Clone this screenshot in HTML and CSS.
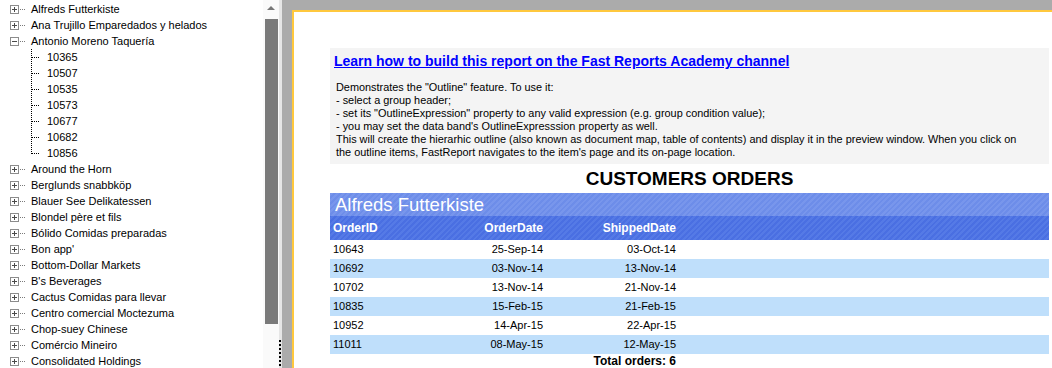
FILE: index.html
```html
<!DOCTYPE html>
<html lang="en">
<head>
  <meta charset="UTF-8">
  <title>Preview - Outline</title>
  <link rel="stylesheet" href="styles.css">
</head>
<body>
  <div class="tree">
    <div class="node"><span class="box plus"></span><span class="dots"></span><span class="label">Alfreds Futterkiste</span></div>
    <div class="node"><span class="box plus"></span><span class="dots"></span><span class="label">Ana Trujillo Emparedados y helados</span></div>
    <div class="node"><span class="box"></span><span class="dots"></span><span class="label">Antonio Moreno Taquería</span></div>
    <div class="leaf"><span class="elbow"></span><span class="label">10365</span></div>
    <div class="leaf"><span class="elbow"></span><span class="label">10507</span></div>
    <div class="leaf"><span class="elbow"></span><span class="label">10535</span></div>
    <div class="leaf"><span class="elbow"></span><span class="label">10573</span></div>
    <div class="leaf"><span class="elbow"></span><span class="label">10677</span></div>
    <div class="leaf"><span class="elbow"></span><span class="label">10682</span></div>
    <div class="leaf last"><span class="elbow"></span><span class="label">10856</span></div>
    <div class="node"><span class="box plus"></span><span class="dots"></span><span class="label">Around the Horn</span></div>
    <div class="node"><span class="box plus"></span><span class="dots"></span><span class="label">Berglunds snabbköp</span></div>
    <div class="node"><span class="box plus"></span><span class="dots"></span><span class="label">Blauer See Delikatessen</span></div>
    <div class="node"><span class="box plus"></span><span class="dots"></span><span class="label">Blondel père et fils</span></div>
    <div class="node"><span class="box plus"></span><span class="dots"></span><span class="label">Bólido Comidas preparadas</span></div>
    <div class="node"><span class="box plus"></span><span class="dots"></span><span class="label">Bon app'</span></div>
    <div class="node"><span class="box plus"></span><span class="dots"></span><span class="label">Bottom-Dollar Markets</span></div>
    <div class="node"><span class="box plus"></span><span class="dots"></span><span class="label">B's Beverages</span></div>
    <div class="node"><span class="box plus"></span><span class="dots"></span><span class="label">Cactus Comidas para llevar</span></div>
    <div class="node"><span class="box plus"></span><span class="dots"></span><span class="label">Centro comercial Moctezuma</span></div>
    <div class="node"><span class="box plus"></span><span class="dots"></span><span class="label">Chop-suey Chinese</span></div>
    <div class="node"><span class="box plus"></span><span class="dots"></span><span class="label">Comércio Mineiro</span></div>
    <div class="node"><span class="box plus"></span><span class="dots"></span><span class="label">Consolidated Holdings</span></div>
  </div>

  <div class="scrollbar">
    <div class="arrow"></div>
    <div class="thumb"></div>
  </div>

  <div class="splitter">
    <div class="grip">
      <span></span><span></span><span></span><span></span><span></span><span></span><span></span>
    </div>
  </div>

  <div class="preview">
    <div class="page">
      <div class="note">
        <a class="link" href="#">Learn how to build this report on the Fast Reports Academy channel</a>
        <div class="desc">
          Demonstrates the "Outline" feature. To use it:<br>
          - select a group header;<br>
          - set its "OutlineExpression" property to any valid expression (e.g. group condition value);<br>
          - you may set the data band's OutlineExpresssion property as well.<br>
          This will create the hierarhic outline (also known as document map, table of contents) and display it in the preview window. When you click on<br>
          the outline items, FastReport navigates to the item's page and its on-page location.
        </div>
      </div>

      <h1 class="title">CUSTOMERS ORDERS</h1>

      <div class="group">Alfreds Futterkiste</div>
      <div class="row head">
        <span class="id">OrderID</span>
        <span class="num">OrderDate</span>
        <span class="num">ShippedDate</span>
      </div>
      <div class="row"><span class="id">10643</span><span class="num">25-Sep-14</span><span class="num">03-Oct-14</span></div>
      <div class="row alt"><span class="id">10692</span><span class="num">03-Nov-14</span><span class="num">13-Nov-14</span></div>
      <div class="row"><span class="id">10702</span><span class="num">13-Nov-14</span><span class="num">21-Nov-14</span></div>
      <div class="row alt"><span class="id">10835</span><span class="num">15-Feb-15</span><span class="num">21-Feb-15</span></div>
      <div class="row"><span class="id">10952</span><span class="num">14-Apr-15</span><span class="num">22-Apr-15</span></div>
      <div class="row alt"><span class="id">11011</span><span class="num">08-May-15</span><span class="num">12-May-15</span></div>
      <div class="row total"><span></span><span></span><span class="num">Total orders: 6</span></div>
    </div>
  </div>
</body>
</html>
```

FILE: styles.css
```css
:root {
  --tree-text: #000000;
  --tree-line: #7a7a7a;
  --scroll-thumb: #7a7a7a;
  --splitter: #e6e6e6;
  --desk: #ababab;
  --page-border: #ffc83d;
  --note-bg: #f4f4f4;
  --link: #0000ff;
  --group-bg: #6d8de9;
  --group-stripe: #7896ec;
  --head-bg: #4a6fe2;
  --head-stripe: #557ae6;
  --row-alt: #bfdffb;
}

* {
  box-sizing: border-box;
  margin: 0;
  padding: 0;
}

body {
  display: flex;
  height: 368px;
  overflow: hidden;
  font-family: 'Liberation Sans', Arial, sans-serif;
  font-size: 11px;
  background: white;
}

/* outline tree */

.tree {
  width: 263px;
  flex: none;
  padding-top: 1px;
  background: white;
  overflow: hidden;
  color: var(--tree-text);
}

.node,
.leaf {
  display: flex;
  align-items: center;
  height: 16px;
  white-space: nowrap;
}

.node {
  padding-left: 10px;
}

.box {
  position: relative;
  width: 9px;
  height: 9px;
  flex: none;
  border: 1px solid #8c8c8c;
  background: white;
}

.box::before {
  content: '';
  position: absolute;
  left: 1px;
  top: 3px;
  width: 5px;
  height: 1px;
  background: #4a4a4a;
}

.box.plus::after {
  content: '';
  position: absolute;
  left: 3px;
  top: 1px;
  width: 1px;
  height: 5px;
  background: #4a4a4a;
}

.dots {
  width: 6px;
  height: 1px;
  margin: 0 5px 0 1px;
  flex: none;
  background: repeating-linear-gradient(to right, var(--tree-line) 0 1px, transparent 1px 2px);
}

.leaf {
  padding-left: 31px;
  align-items: stretch;
}

.leaf .label {
  display: flex;
  align-items: center;
}

.elbow {
  width: 16px;
  flex: none;
  background:
    repeating-linear-gradient(to bottom, #000 0 1px, transparent 1px 2px) 0 0 / 1px 100% no-repeat,
    repeating-linear-gradient(to right, #000 0 1px, transparent 1px 2px) 1px 8px / 7px 1px no-repeat;
}

.leaf.last .elbow {
  background:
    repeating-linear-gradient(to bottom, #000 0 1px, transparent 1px 2px) 0 0 / 1px 9px no-repeat,
    repeating-linear-gradient(to right, #000 0 1px, transparent 1px 2px) 1px 8px / 7px 1px no-repeat;
}

/* scrollbar + splitter */

.scrollbar {
  width: 16px;
  flex: none;
  display: flex;
  flex-direction: column;
  align-items: center;
  background: #fafafa;
}

.arrow {
  width: 0;
  height: 0;
  margin: 6px 0 9px;
  border-left: 4.5px solid transparent;
  border-right: 4.5px solid transparent;
  border-bottom: 4px solid #777;
}

.thumb {
  width: 13px;
  height: 305px;
  background: var(--scroll-thumb);
}

.splitter {
  width: 3px;
  flex: none;
  display: flex;
  flex-direction: column;
  justify-content: flex-end;
  background: var(--splitter);
}

.grip {
  display: flex;
  flex-direction: column;
  gap: 2px;
  padding-bottom: 2px;
}

.grip span {
  width: 2px;
  height: 2px;
  background: #000;
}

/* report preview */

.preview {
  flex: 1;
  min-width: 0;
  overflow: hidden;
  padding: 10px 0 0 10px;
  background: var(--desk);
}

.page {
  width: 800px;
  height: 400px;
  padding: 36px 0 0 36px;
  background: white;
  border-left: 2px solid var(--page-border);
  border-top: 2px solid var(--page-border);
}

.note {
  width: 719px;
  padding: 4px 4px 5px;
  background: var(--note-bg);
  color: #000;
}

.link {
  display: block;
  line-height: 18px;
  font-size: 14px;
  font-weight: bold;
  color: var(--link);
  white-space: nowrap;
}

.desc {
  margin-top: 11px;
  padding-left: 2px;
  line-height: 13px;
  font-size: 10.9px;
  white-space: nowrap;
}

.title {
  width: 719px;
  line-height: 29px;
  font-size: 19px;
  font-weight: bold;
  text-align: center;
  color: #000;
}

.group {
  width: 719px;
  height: 23px;
  padding-left: 5px;
  line-height: 23px;
  font-size: 18.5px;
  color: white;
  background: repeating-linear-gradient(-45deg, var(--group-bg) 0 2px, var(--group-stripe) 2px 4px);
}

.row {
  display: grid;
  grid-template-columns: 110px 103px 133px;
  width: 719px;
  height: 19px;
  line-height: 19px;
  color: #000;
}

.row .id {
  padding-left: 3px;
}

.row .num {
  text-align: right;
  white-space: nowrap;
}

.row.alt {
  background: var(--row-alt);
}

.row.head {
  height: 24px;
  line-height: 24px;
  font-size: 12px;
  font-weight: bold;
  color: white;
  background: repeating-linear-gradient(-45deg, var(--head-bg) 0 2px, var(--head-stripe) 2px 4px);
}

.row.total {
  height: 15px;
  line-height: 15px;
  font-size: 12px;
  font-weight: bold;
}
```
